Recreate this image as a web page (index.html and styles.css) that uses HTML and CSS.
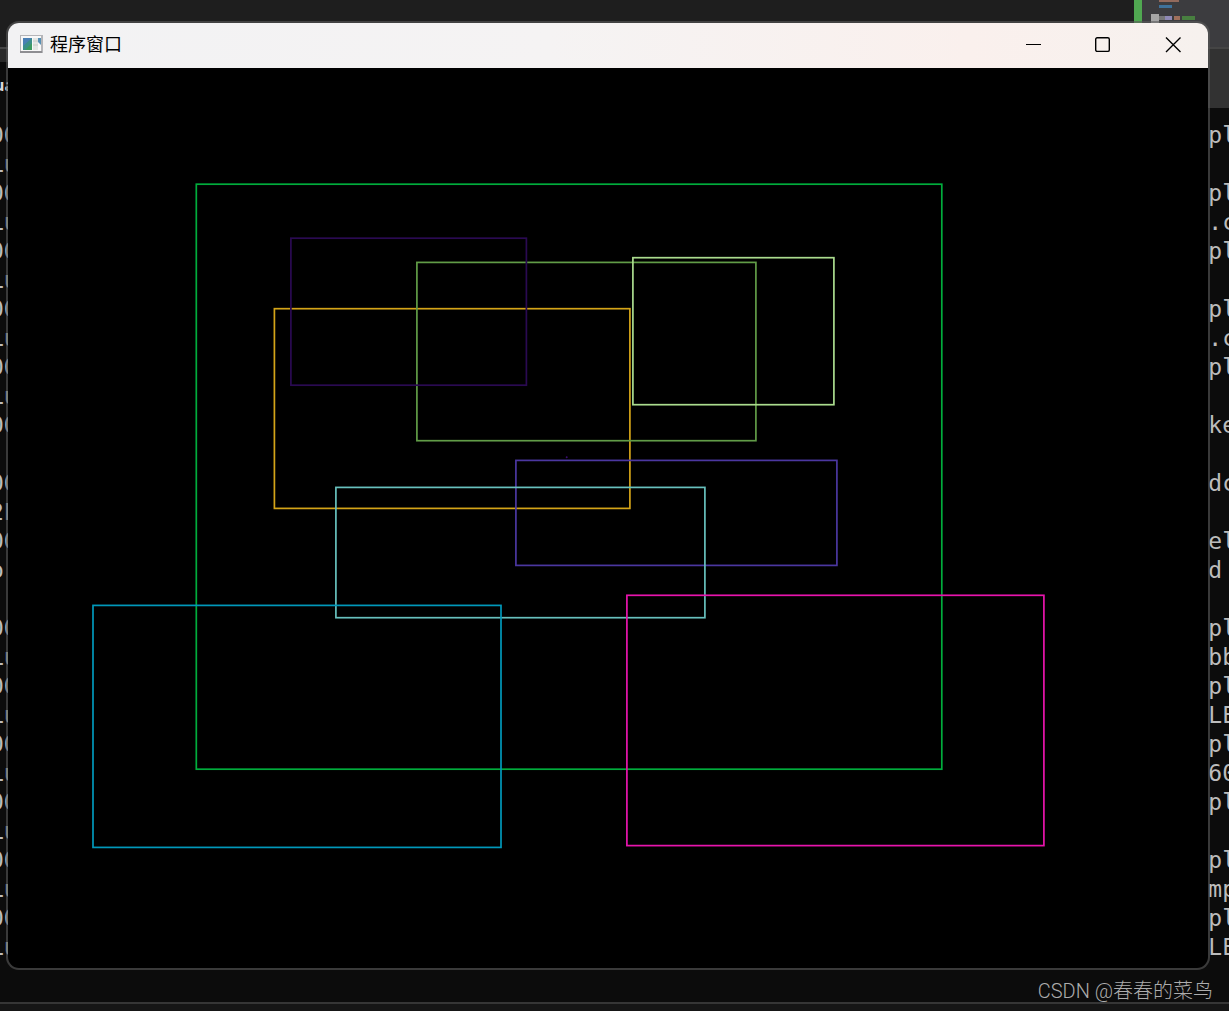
FILE: index.html
```
<!DOCTYPE html>
<html lang="zh">
<head>
    <meta charset="UTF-8">
    <meta name="viewport" content="width=device-width, initial-scale=1.0">
    <title>程序窗口</title>
    <link rel="stylesheet" href="styles.css">
</head>
<body>
    <!-- Editor and console behind the window -->
    <div class="editor">
        <div class="tabs"></div>
        <div class="preview">
            <svg width="86" height="24" viewBox="0 0 86 24">
                <rect x="9" y="14" width="8" height="10" fill="#a5a5a5"/>
                <rect x="17" y="0" width="20" height="2" fill="#936a5c"/>
                <rect x="17" y="5" width="13" height="3" fill="#3f729b"/>
                <rect x="17" y="16" width="6" height="4" fill="#777"/>
                <rect x="23" y="16" width="7" height="4" fill="#8f89b5"/>
                <rect x="32" y="16" width="6" height="4" fill="#a0705c"/>
                <rect x="40" y="16" width="13" height="4" fill="#487f40"/>
            </svg>
        </div>
    </div>
    <div class="toolbar">
        <div class="panel-title">ua</div>
        <div class="toolbar-end"></div>
    </div>
    <div class="console">
        <div class="line"><span>00</span><span>pl</span></div>
        <div class="line"><span>Lu</span></div>
        <div class="line"><span>00</span><span>pl</span></div>
        <div class="line"><span>Lu</span><span>.c</span></div>
        <div class="line"><span>00</span><span>pl</span></div>
        <div class="line"><span>Lu</span></div>
        <div class="line"><span>00</span><span>pl</span></div>
        <div class="line"><span>Lu</span><span>.c</span></div>
        <div class="line"><span>00</span><span>pl</span></div>
        <div class="line"><span>Lu</span></div>
        <div class="line"><span>00</span><span>ke</span></div>
        <div class="line"></div>
        <div class="line"><span>00</span><span>dc</span></div>
        <div class="line"><span>2L</span></div>
        <div class="line"><span>00</span><span>el</span></div>
        <div class="line"><span>o</span><span>d </span></div>
        <div class="line"></div>
        <div class="line"><span>00</span><span>pl</span></div>
        <div class="line"><span>Lu</span><span>bb</span></div>
        <div class="line"><span>00</span><span>pl</span></div>
        <div class="line"><span>Lu</span><span>LE</span></div>
        <div class="line"><span>00</span><span>pl</span></div>
        <div class="line"><span>Lu</span><span>60</span></div>
        <div class="line"><span>00</span><span>pl</span></div>
        <div class="line"><span>Lu</span></div>
        <div class="line"><span>00</span><span>pl</span></div>
        <div class="line"><span>Lu</span><span>mp</span></div>
        <div class="line"><span>00</span><span>pl</span></div>
        <div class="line"><span>Lu</span><span>LE</span></div>
    </div>
    <div class="statusbar"></div>

    <!-- Program window -->
    <main class="window">
        <header class="titlebar">
            <svg class="app-icon" width="24" height="20" viewBox="0 0 24 20">
                <rect x="0" y="0" width="23" height="18" fill="#b5b5b8"/>
                <rect x="1" y="1" width="20" height="15" fill="#f8f8f8"/>
                <rect x="0" y="16" width="22" height="2" fill="#8e8e92"/>
                <rect x="3" y="3" width="9" height="12" fill="#3c8f8a"/>
                <path d="M3 3h9L3 11z" fill="#4a80b5"/>
                <path d="M12 8v7H5z" fill="#3c9a60"/>
                <rect x="13" y="3" width="5" height="12" fill="#e3e6e3"/>
                <path d="M13 6h5M13 10h5" stroke="#c8ccc8"/>
                <path d="M18 3h3v7l-3-3z" fill="#5790b4"/>
            </svg>
            <h1>程序窗口</h1>
            <div class="controls">
                <button type="button" aria-label="最小化">
                    <svg width="16" height="16" viewBox="0 0 16 16"><path d="M1 7.5h15" stroke-width="1"/></svg>
                </button>
                <button type="button" aria-label="最大化">
                    <svg width="16" height="16" viewBox="0 0 16 16"><rect x="0.7" y="0.8" width="13.6" height="13.6" rx="1.5"/></svg>
                </button>
                <button type="button" aria-label="关闭">
                    <svg width="16" height="16" viewBox="0 0 16 16"><path d="M1 0.5L15.5 15M15.5 0.5L1 15"/></svg>
                </button>
            </div>
        </header>
        <svg class="canvas" viewBox="0 0 1200 900">
            <rect x="188.3" y="116.2" width="745.5" height="585" stroke="#00ad3c"/>
            <rect x="266.4" y="240.7" width="355.5" height="199.7" stroke="#d4a418"/>
            <rect x="408.9" y="194.4" width="339" height="178.3" stroke="#619c47"/>
            <rect x="624.9" y="189.7" width="201" height="147" stroke="#abdc8e"/>
            <rect x="507.9" y="392.4" width="321" height="105" stroke="#4b37a0"/>
            <rect x="327.9" y="419.4" width="369" height="130.3" stroke="#67c0bd"/>
            <rect x="85" y="537.4" width="408" height="242" stroke="#0098ba"/>
            <rect x="618.9" y="527.3" width="417" height="250.3" stroke="#e814ad"/>
            <rect x="282.9" y="170.2" width="235.5" height="147" stroke="#2a0a52"/>
            <circle cx="558.7" cy="389.3" r="1" fill="#3b0c70"/>
        </svg>
    </main>

    <div class="watermark">CSDN @春春的菜鸟</div>
</body>
</html>
```
FILE: styles.css
```
* {
    box-sizing: border-box;
}
body {
    margin: 0;
    min-height: 100vh;
    display: flex;
    flex-direction: column;
    position: relative;
    overflow: hidden;
    background: #0c0c0c;
    font-family: "Liberation Sans", "Noto Sans CJK SC", sans-serif;
}

/* Background */
.editor {
    display: flex;
    height: 47px;
    background: #1e1e1e;
}
.tabs {
    flex: 1;
}
.preview {
    width: 95px;
    border-left: 8px solid #50a851;
    background: #3c3c3f;
}
.preview svg {
    display: block;
}
.toolbar {
    display: flex;
    justify-content: space-between;
    height: 61px;
    border-top: 2px solid #454545;
}
.panel-title {
    width: 20px;
    border-top: 13px solid #292929;
    color: #d8d8d8;
    font-family: "Noto Sans", sans-serif;
    font-size: 16px;
    font-weight: bold;
    line-height: 46px;
    text-indent: -6px;
}
.toolbar-end {
    width: 40px;
    background: #323232;
}
.console {
    flex: 1;
    padding-top: 13px;
    color: #bcbcbc;
    font-family: "DejaVu Sans Mono", monospace;
    font-size: 23px;
    line-height: 29px;
}
.line {
    display: flex;
    justify-content: space-between;
    height: 29px;
    margin: 0 -7px 0 -10px;
    white-space: pre;
}
.statusbar {
    height: 9px;
    border-top: 2px solid #363636;
    background: #161616;
}

/* Window */
.window {
    position: absolute;
    top: 21px;
    left: 6px;
    right: 19px;
    border: 2px solid rgba(90, 90, 90, 0.6);
    border-radius: 13px;
    background: #000;
    background-clip: padding-box;
    overflow: hidden;
}
.titlebar {
    display: flex;
    align-items: center;
    height: 45px;
    padding: 0 0 2px 12px;
    background: linear-gradient(90deg, #f2f2f3 0%, #f5f3f3 45%, #faf0ed 80%, #f6f1ee 100%);
}
.titlebar h1 {
    flex: 1;
    margin: 0 0 0 6px;
    color: #000;
    font-size: 18px;
    font-weight: normal;
    line-height: 24px;
}
.controls {
    display: flex;
    height: 100%;
}
.controls button {
    display: flex;
    align-items: center;
    justify-content: center;
    width: 70px;
    padding: 0;
    border: none;
    background: none;
}
.controls svg {
    fill: none;
    stroke: #000;
    stroke-width: 1.4;
}
.canvas {
    display: block;
    width: 100%;
    fill: none;
    stroke-width: 1.7;
}

.watermark {
    position: absolute;
    right: 16px;
    bottom: 6px;
    color: #adadad;
    font-family: Roboto, "Noto Sans CJK SC", sans-serif;
    font-size: 20px;
    font-weight: 300;
    line-height: 28px;
}
```
